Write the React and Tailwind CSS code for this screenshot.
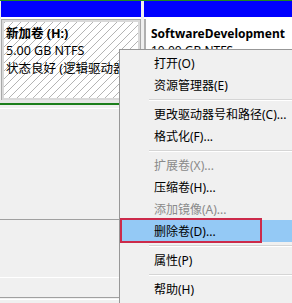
const menuItems = [
  { label: "打开(O)" },
  { label: "资源管理器(E)" },
  { sep: true },
  { label: "更改驱动器号和路径(C)..." },
  { label: "格式化(F)..." },
  { sep: true },
  { label: "扩展卷(X)...", disabled: true },
  { label: "压缩卷(H)..." },
  { label: "添加镜像(A)...", disabled: true },
  { label: "删除卷(D)...", active: true },
  { sep: true },
  { label: "属性(P)" },
  { sep: true },
  { label: "帮助(H)" },
];

const ContextMenu = () => {
  return (
    <div className="absolute left-[119px] top-[49px] w-[190px] h-[270px] border-l border-t border-[#979797] bg-[#f0f0f0] pt-[2px]">
      {menuItems.map((item, i) =>
        item.sep ? (
          <div key={i} className="h-[7px] flex flex-col justify-center pl-[29px]">
            <div className="h-px bg-[#d5d5d5]" />
            <div className="h-px bg-white" />
          </div>
        ) : (
          <div
            key={i}
            className={`relative h-[22px] flex items-center pl-[34px] pt-px ${item.active ? "bg-[#94c9f5]" : ""} ${item.disabled ? "text-[#8a8a8a]" : "text-black"}`}
          >
            {item.label}
            {item.active && (
              <span className="absolute left-0 -top-[2px] -bottom-[1px] w-[142px] border-2 border-[#cc2a4a]" />
            )}
          </div>
        )
      )}
    </div>
  );
};

const App = () => {
  return (
    <div className="relative w-[292px] h-[303px] overflow-hidden bg-[#f0f0f0] text-[12px] leading-[17.5px] text-black font-['Noto_Sans','Noto_Sans_CJK_SC',sans-serif]">
      <div className="h-px bg-[#1f8a1f]" />
      <div className="flex h-[99px] pl-px gap-[3px]">
        <div className="w-[140px] flex flex-col">
          <div className="h-[16px] bg-[#0000ff]" />
          <div className="h-[2px] bg-white" />
          <div className="flex-1 border border-[#a9a9a9] bg-[#d9d9d9] p-[2px] border-b-0">
            <div className="h-full pl-[2px] pt-[2.5px] text-[12.5px] bg-[repeating-linear-gradient(135deg,#b4b4b4_0px,#b4b4b4_1px,#ffffff_1px,#ffffff_5.66px)]">
              <div className="font-bold">新加卷 (H:)</div>
              <div>5.00 GB NTFS</div>
              <div className="whitespace-nowrap">状态良好 (逻辑驱动器)</div>
            </div>
          </div>
        </div>
        <div className="flex-1 flex flex-col">
          <div className="h-[16px] bg-[#0000ff]" />
          <div className="h-[2px] bg-white" />
          <div className="flex-1 border-l-2 border-[#b0b0b0] bg-white pl-[5px] pt-[5.5px] whitespace-nowrap">
            <div className="font-bold">SoftwareDevelopment</div>
            <div>10.00 GB NTFS</div>
          </div>
        </div>
      </div>
      <div className="h-[3px] bg-[#e6e6e6]" />
      <div className="h-[2px] bg-[#1c7f1c]" />
      <div className="h-[3px]" />
      <div className="h-px bg-white" />
      <div className="h-[110px]" />
      <div className="h-px bg-[#a0a0a0]" />
      <div className="h-[57px]" />
      <div className="h-px bg-white" />
      <div className="h-[19px]" />
      <div className="h-px bg-[#a0a0a0]" />
      <div className="h-px" />
      <div className="h-px bg-white" />
      <ContextMenu />
    </div>
  );
};

export default App;
